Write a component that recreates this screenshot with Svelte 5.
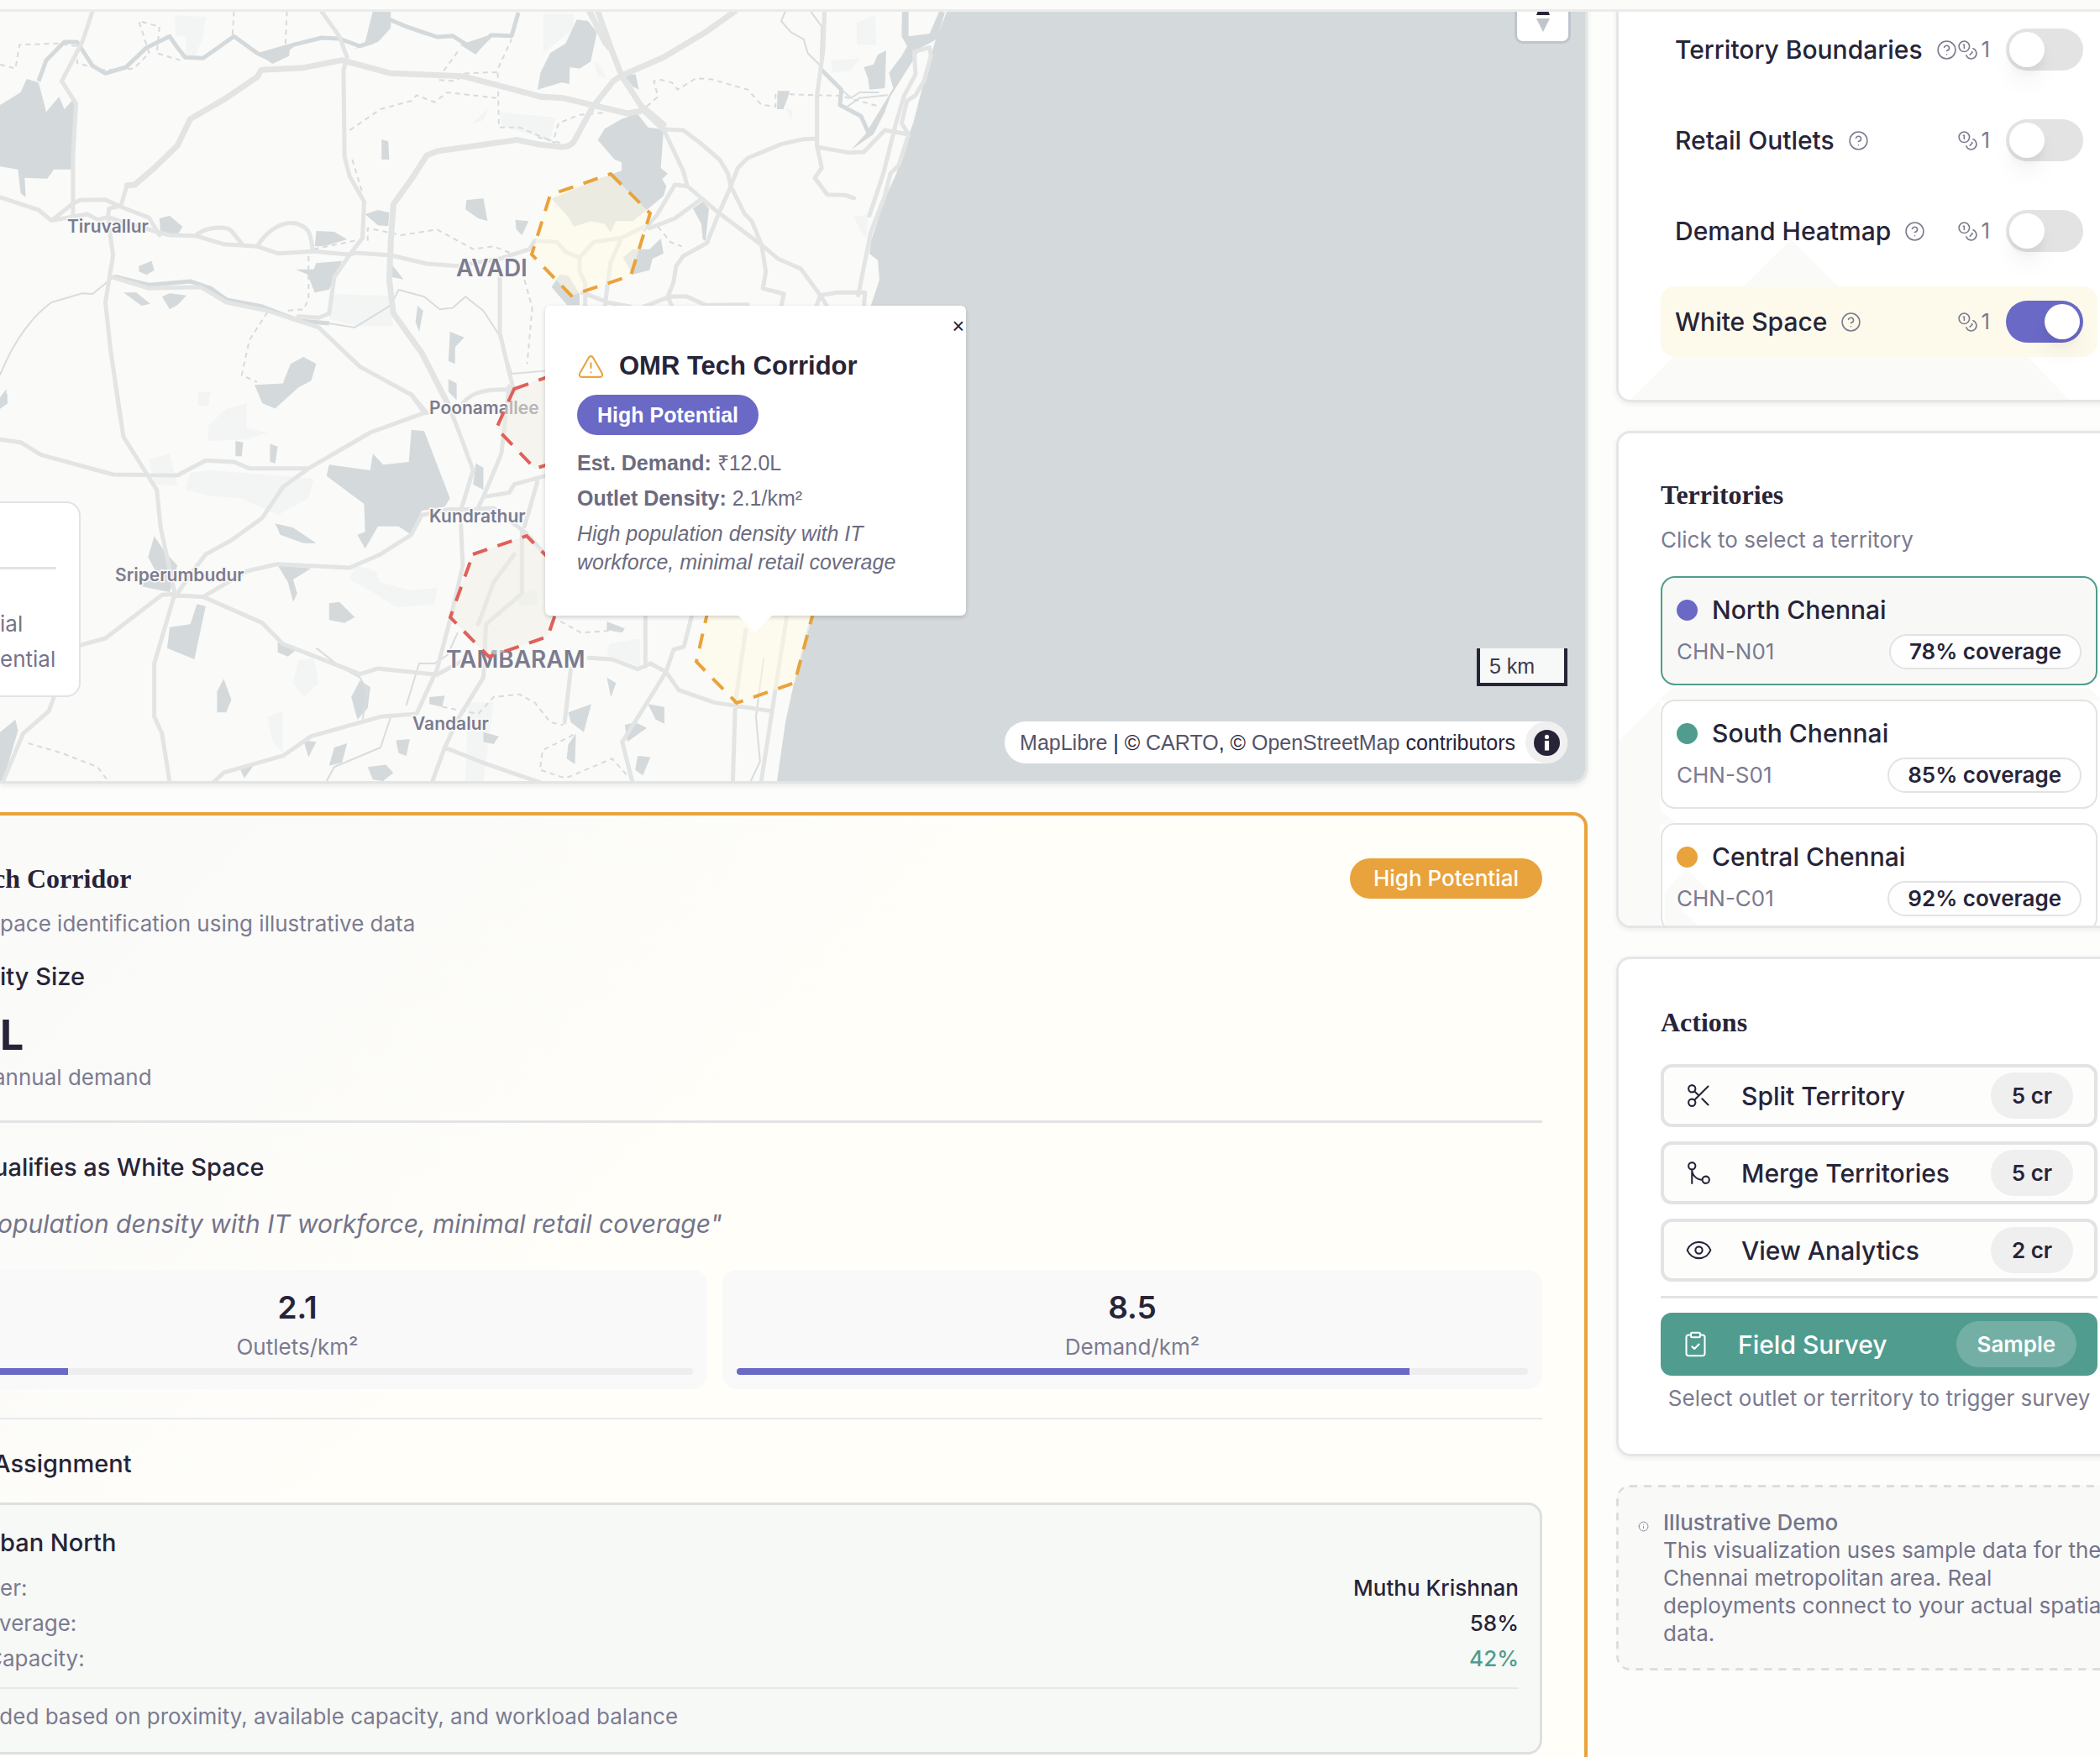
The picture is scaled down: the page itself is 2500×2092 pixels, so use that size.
<script lang="ts">
  const icons = {
    help: "M2 12a10 10 0 1 0 20 0a10 10 0 1 0-20 0M9.09 9a3 3 0 0 1 5.83 1c0 2-3 3-3 3M12 17h.01",
    info: "M2 12a10 10 0 1 0 20 0a10 10 0 1 0-20 0M12 16v-4M12 8h.01",
    coins: "M2 8a6 6 0 1 0 12 0a6 6 0 1 0-12 0M18.09 10.37A6 6 0 1 1 10.34 18M7 6h1v4M16.71 13.88l.7.71-2.82 2.82",
    warning: "m21.73 18-8-14a2 2 0 0 0-3.48 0l-8 14A2 2 0 0 0 4 21h16a2 2 0 0 0 1.73-3M12 9v4M12 17h.01",
    scissors: "M3 6a3 3 0 1 0 6 0a3 3 0 1 0-6 0M8.12 8.12 12 12M20 4 8.12 15.88M3 18a3 3 0 1 0 6 0a3 3 0 1 0-6 0M14.8 14.8 20 20",
    merge: "M15 18a3 3 0 1 0 6 0a3 3 0 1 0-6 0M3 6a3 3 0 1 0 6 0a3 3 0 1 0-6 0M6 21V9a9 9 0 0 0 9 9",
    eye: "M2.06 12.35a1 1 0 0 1 0-.7 10.75 10.75 0 0 1 19.88 0 1 1 0 0 1 0 .7 10.75 10.75 0 0 1-19.88 0M9 12a3 3 0 1 0 6 0a3 3 0 1 0-6 0",
    clipboard: "M9 2h6a1 1 0 0 1 1 1v2a1 1 0 0 1-1 1H9a1 1 0 0 1-1-1V3a1 1 0 0 1 1-1zM16 4h2a2 2 0 0 1 2 2v14a2 2 0 0 1-2 2H6a2 2 0 0 1-2-2V6a2 2 0 0 1 2-2h2M9 14l2 2 4-4"
  };

  let layers = [
    { name: "Territory Boundaries", cost: 1, on: false },
    { name: "Retail Outlets", cost: 1, on: false },
    { name: "Demand Heatmap", cost: 1, on: false },
    { name: "White Space", cost: 1, on: true }
  ];

  const territories = [
    { name: "North Chennai", code: "CHN-N01", coverage: 78, color: "#6a69c6" },
    { name: "South Chennai", code: "CHN-S01", coverage: 85, color: "#509c8f" },
    { name: "Central Chennai", code: "CHN-C01", coverage: 92, color: "#e8a33d" }
  ];

  let selected = "CHN-N01";

  const actions = [
    { label: "Split Territory", icon: icons.scissors, cost: "5 cr" },
    { label: "Merge Territories", icon: icons.merge, cost: "5 cr" },
    { label: "View Analytics", icon: icons.eye, cost: "2 cr" }
  ];

  const stats = [
    { value: "2.1", label: "Outlets/km²", percent: 21 },
    { value: "8.5", label: "Demand/km²", percent: 85 }
  ];

  // each sheet of the base map has its own grid
  const sheets = [
    {
      transform: "scale(.6122 .3333)",
      urban: "M340 55L400 60L395 130L380 200L360 200L362 130L342 130ZM640 1070L650 1052L755 1055L765 1165L700 1165L640 1140ZM972 400L1080 420L1070 500L975 450ZM918 440L948 390L940 430ZM385 1400L410 1400L405 1450L385 1450Z",
      water: "M0 375L40 330L52 282L75 295L90 400L115 345L125 390L145 350L140 605L105 605L92 638L48 635L50 705L40 690L35 605L0 595ZM742 498L755 505L757 570L742 570ZM710 765L735 750L757 760L755 808L735 805ZM907 715L940 708L948 790L930 780L905 748ZM1002 785L1028 790L1015 840L1004 820ZM310 780L330 770L355 810L345 840L312 835ZM615 825L650 828L675 855L630 880L612 880ZM575 962L610 962L615 940L665 932L640 1035L612 1045L598 980ZM762 945L785 998L762 990ZM270 950L295 932L300 965L285 982L270 970ZM240 1045L265 1045L292 1085L275 1092ZM315 1060L330 1048L363 1055L345 1090L330 1105ZM812 1092L823 1110L815 1185L808 1150ZM875 1185L903 1205L885 1240L885 1300L872 1290ZM495 1375L550 1370L565 1300L590 1275L615 1300L605 1360L580 1385L535 1460L510 1440ZM872 1355L888 1370L888 1430L872 1400ZM725 40L760 40L760 100L735 150L690 175L710 150ZM500 190L565 155L562 200L530 228ZM895 160L960 120L925 195ZM0 1440L15 1405L12 1445L0 1460Z",
      rivers: "M75 290L90 215L125 150L150 150L180 235L205 262L245 240L285 170L330 130L345 170L360 205L395 208L455 130L500 190L530 215L570 160L625 135L660 138L700 165L725 150L745 60L790 95L850 132L880 128L925 180L955 125L995 128L1008 45M222 988L290 1018L370 1005L410 1030L440 1070L510 1095L580 1145L640 1155",
      streams: "M0 1340C30 1200 70 1120 100 1080L160 1048L180 1050L222 988M640 1155L690 1170L760 1090L775 1035L825 1060L855 1105L880 1100L905 1060L940 1110L970 1195L995 1335L1060 1325",
      tracks: "M0 230L30 245L38 160L110 155L150 165L150 225L200 250L260 245L290 190L270 75L310 95L305 190L350 215M455 40L452 130M558 40L555 160M890 185L850 285L885 290L905 262L965 258L995 140M968 260L970 455L1010 455L1080 510M680 465L740 390L800 360L810 340L845 365L870 330L965 350M685 570L705 690M715 860L715 815L780 840L850 820L920 890L960 880L1000 910M600 915L600 1070L590 1105L555 1110M520 1115L485 1215L470 1340L500 1365M1020 1000L1035 1100L1025 1300M610 890L690 860",
      highways: "M247 662L262 660L300 600L345 520L370 425L440 350L500 275L508 250L590 242L665 215L760 262L900 272L1050 345L1060 347M870 1440L820 1260L765 1120L757 1000L760 860L765 730L800 640L830 555L850 540L1005 500",
      roads: "M0 705L75 750L100 788L170 765L190 785L210 775L250 800L330 840L380 842L435 872L500 880L540 905L610 898L680 910L690 903L760 912L830 942L890 950L970 925L1030 890L1040 860M180 40L160 150L120 290L148 370L142 560L142 770M100 788L140 730L155 715L205 713L230 735L290 778L310 840M210 775L212 745L235 735L247 662M625 40L660 130L675 205L668 250L670 560L680 630L708 720L705 850L680 910L650 990L640 1120L620 1135L580 1130M210 775L215 850L220 910L205 1080L215 1250L235 1500M218 990L290 1030L390 1025L440 1080L520 1110L620 1170L700 1310L800 1410L830 1475M380 842C400 810 440 805 450 825L472 875M500 880C520 820 550 790 575 798C600 810 605 830 608 898M972 985L972 1190L990 1330L1000 1400M900 1440C920 1395 950 1390 1000 1392"
    },
    {
      transform: "translate(0 460) scale(.6122 .3333)",
      urban: "M405 300L480 310L610 330L600 400L540 460L470 400L405 390L360 370L370 310ZM440 80L480 60L480 150L520 165L480 190L405 195L405 140ZM290 260L330 240L345 355L300 350ZM690 640L730 660L740 700L800 730L850 720L845 780L770 790L730 740L680 690ZM580 980L610 970L620 1060L590 1110L570 1060ZM910 1130L960 1130L940 1410L905 1410ZM520 1180L550 1160L550 1310L530 1270ZM1185 920L1245 900L1245 1000L1180 960ZM1005 740L1045 730L1045 780L1010 785Z",
      water: "M800 155L825 160L875 400L865 430L820 445L800 530L775 500L735 500L710 580L695 530L710 520L708 420L635 320L640 280L720 300L725 240L745 280L795 270ZM300 535L320 590L345 640L330 735L275 715L275 690L305 670L288 610ZM383 778L400 785L378 975L325 935L330 860L370 850ZM540 640L605 650L570 690L578 740L570 770L560 700ZM640 775L660 770L690 825L670 845L640 835ZM435 1045L450 1120L440 1165L422 1165L422 1090ZM540 915L580 935L560 965L540 950ZM700 1050L720 1075L715 1150L695 1190L683 1110ZM535 490L570 505L615 560L590 560L545 530ZM458 195L473 200L470 250L458 250ZM525 205L540 215L535 275L525 270ZM925 275L940 290L940 370L920 350ZM0 1235L30 1190L35 1230L5 1415L0 1415ZM650 1290L675 1275L665 1345L640 1355ZM715 1360L750 1352L765 1380L745 1410L725 1405ZM770 1265L797 1260L790 1320L775 1310ZM590 1265L615 1270L600 1325ZM465 1360L495 1350L475 1400ZM835 1110L865 1105L860 1145L835 1135ZM940 1235L970 1250L960 1278L940 1270ZM1105 1165L1150 1135L1135 1235L1110 1200ZM1180 1040L1198 1060L1188 1110ZM1260 1135L1292 1145L1292 1205L1275 1190ZM1215 1210L1235 1200L1258 1220L1220 1270ZM1240 1320L1265 1325L1250 1390L1235 1370ZM1105 1280L1120 1240L1118 1350L1102 1330ZM1180 840L1215 865L1210 880L1180 870ZM0 40L12 10L15 60L0 80Z",
      rivers: "",
      streams: "M615 935L660 1000L700 1040L715 1090L705 1190M760 1180L740 1290L650 1360L635 1410M890 880L870 960L845 990L815 990L790 1140M1485 970L1470 1180L1478 1340L1460 1410",
      tracks: "M55 1275L120 1310L190 1360L210 1410M860 1145L930 1170L960 1110L1010 1100L1040 1130L1070 1200L1095 1210M1115 1245L1055 1300L1050 1370L1100 1400L1190 1330L1225 1400M1090 840L1130 880L1210 870",
      highways: "",
      roads: "M225 0L240 180L305 370L312 500L340 740L300 990L300 1180L315 1240L330 1415M0 190L40 200L80 245L220 315L345 318L400 265L455 270L485 293L600 293M800 30L825 95L720 165L650 240L600 293L550 360L510 470L450 550L400 600L375 660L345 740M870 60L890 150L920 300L895 450L900 640L880 800L850 1010L810 1170M1060 320L1000 350L990 380L940 395L920 470M990 0L975 240L940 395M820 460L870 440L960 435L1020 520L1060 600M335 745L395 752L480 660L540 635L680 648L740 600L800 530L820 460M155 925L205 900L315 745L340 742M395 752L510 845L550 920L700 1028L735 1008L850 1030L900 980M1020 500L1045 340M1015 520L1015 740L945 850L940 1040L890 1190L865 1290L840 1415M1000 600L960 700L930 850M865 1290L940 1345L1050 1415M415 1415L435 1380L550 1320L605 1250L740 1180L810 1170M105 1110L95 1160L45 1240L5 1415M1110 1010L1098 1200M1145 970L1190 975L1240 1010L1265 990L1295 1020L1320 1085L1390 1130L1500 1160M1255 820L1255 1000M1345 820L1330 930L1310 940L1295 1020L1265 1110L1210 1270L1230 1415M1425 1415L1430 1130L1450 870M1480 1415L1530 820"
    },
    {
      transform: "translate(640 0) scale(.3333)",
      urban: "M1140 80L1205 55L1210 160L1140 160ZM1050 215L1150 210L1120 250L1050 260ZM20 50L130 50L130 100L20 190ZM0 425L60 420L50 470L0 480ZM200 220L225 235L245 280L215 270ZM885 385L912 395L905 430ZM1130 775L1180 765L1175 850L1150 820Z",
      water: "M140 70L180 75L212 115L190 220L150 245L115 240L113 300L85 295L0 320L10 260L45 190L100 155ZM355 405L395 455L450 462L440 600L465 620L445 640L460 665L450 700L400 742L340 790L280 790L260 830L240 800L190 790L130 810L110 775L50 710L215 640L300 610L300 580L275 570L215 500L240 460L300 425ZM310 270L350 265L362 320L340 310ZM857 325L900 325L895 345L878 390L855 390ZM555 745L590 720L612 745L600 860L590 855L585 800ZM305 920L340 890L400 890L440 852L450 905L410 925L400 965L340 980ZM80 980L110 985L150 1050L150 1090L105 1090L50 1025ZM1255 260L1300 200L1320 165L1300 130L1302 40L1325 40L1325 130L1400 120L1435 40L1455 45L1425 140L1370 170L1310 265L1260 345L1240 400L1200 480L1120 535L1170 480L1225 390L1270 315ZM1165 240L1200 230L1215 195L1245 180L1242 280L1240 315L1185 320L1180 280Z",
      rivers: "M1010 245L1085 320L1080 375L1155 415L1180 470",
      streams: "M975 40L1015 95L1010 245M885 40L870 75L905 115L950 140L965 190L1010 235M1100 385L1150 350L1250 340M1085 320L1120 350L1150 330L1220 330",
      tracks: "M390 380L430 345L415 290L440 285L480 295L500 320L565 280L620 283L750 320L800 375L850 380L850 330M900 337L1080 342L1220 380M60 490L75 440L150 410L240 402M0 490L80 510M430 810L475 865L515 880",
      highways: "M8 345L90 350L320 405L380 395M-74 500L0 515L85 525Q115 525 130 505L195 385L270 290L300 270L450 205L600 115L705 40M185 40L240 150L265 180M215 40L265 180L300 270L380 395L450 462M380 385L450 445",
      roads: "M450 462L520 610L535 665L640 755L800 875L860 925L940 960L1010 1055L1035 1095M450 462L520 465L580 510L650 570L680 620L690 665L740 765L765 790L800 875L815 970L805 1030L880 1050L870 1095M998 495L950 497L870 515L750 565L715 600L690 665L640 780L605 868L520 915L495 950L485 1010L465 1060L480 1095M1025 40L1020 180L998 340L998 520L1015 600L990 635L1035 695L1100 697L1130 708M998 525L1110 545L1165 543L1240 465L1325 480M1345 185L1400 170L1405 200L1380 290L1350 340L1320 360L1300 440L1325 480L1290 590L1260 620L1240 700L1190 830L1145 1055M1345 185L1350 265L1310 340L1280 440L1235 620L1185 770M380 820L425 770L490 660L535 665M400 815L490 780L580 715M380 1095L470 1060L530 1058L600 1090L750 1088M1010 1055L1070 1045L1170 1045L1165 1095M160 1045L250 1080L330 1095M995 1095L1010 1055M0 860L70 865L100 900L150 920L150 970L170 1010L170 1095M150 920L200 865L300 850L380 810M300 850L260 940L240 1095"
    }
  ];

  const places = [
    { name: "Tiruvallur", x: 80, y: 277, city: false },
    { name: "AVADI", x: 543, y: 329, city: true },
    { name: "Poonamallee", x: 511, y: 493, city: false },
    { name: "Kundrathur", x: 511, y: 622, city: false },
    { name: "Sriperumbudur", x: 137, y: 692, city: false },
    { name: "TAMBARAM", x: 531, y: 795, city: true },
    { name: "Vandalur", x: 491, y: 869, city: false }
  ];

  const zones = [
    { points: "727,207 774,254 751,328 680,352 633,303 655,232", high: true },
    { points: "612,463 683,438 730,486 708,535 637,558 591,510", high: false },
    { points: "563,660 627,638 676,688 652,758 582,782 536,735", high: false },
    { points: "851,690 925,668 972,715 946,813 877,837 829,788", high: true }
  ];
</script>

{#snippet icon(path, size)}
  <svg class="icon {size}" viewBox="0 0 24 24" aria-hidden="true"><path d={path} /></svg>
{/snippet}

<div class="page">
  <header class="topbar"></header>

  <div class="layout">
    <main>
      <section class="map">
        <svg class="canvas" viewBox="0 0 1887 930" preserveAspectRatio="xMinYMin slice">
          <rect class="land" width="1887" height="930" />
          {#each sheets as sheet}
            <g transform={sheet.transform}>
              <path class="urban" d={sheet.urban} />
              <path class="water" d={sheet.water} />
              <path class="river" d={sheet.rivers} />
              <path class="stream" d={sheet.streams} />
              <path class="track" d={sheet.tracks} />
            </g>
          {/each}
          <path class="water" d="M1127 0L1127 14L1113 50L1103 85L1087 147L1082 160L1067 207L1053 237L1037 287L1035 302L1045 310L1047 333L1037 363L1000 560L965 732L948 800L935 860L925 930H1887V0Z" />
          {#each sheets as sheet}
            <g transform={sheet.transform}>
              <path class="road" d={sheet.roads} />
              <path class="road highway" d={sheet.highways} />
            </g>
          {/each}
          {#each places as place}
            <text class="place" class:city={place.city} x={place.x} y={place.y}>{place.name}</text>
          {/each}
          {#each zones as zone}
            <polygon class="zone" class:high={zone.high} points={zone.points} />
          {/each}
        </svg>

        <button class="compass" aria-label="Reset bearing to north">
          <svg viewBox="0 0 20 60" aria-hidden="true">
            <path d="M10 8L18 29H2Z" fill="#272438" />
            <path d="M2 33H18L10 49Z" fill="#c0c4cb" />
          </svg>
        </button>

        <div class="legend">
          <div class="legend-title"></div>
          <p>ial</p>
          <p>ential</p>
        </div>

        <article class="popup">
          <button class="close" aria-label="Close popup">×</button>
          <h3>{@render icon(icons.warning, "large")}OMR Tech Corridor</h3>
          <span class="popup-badge">High Potential</span>
          <p><strong>Est. Demand:</strong> ₹12.0L</p>
          <p><strong>Outlet Density:</strong> 2.1/km²</p>
          <p><em>High population density with IT workforce, minimal retail coverage</em></p>
        </article>

        <div class="map-corner">
          <div class="scale">5 km</div>
          <div class="attribution">
            <span><a href="#maplibre">MapLibre</a> | © <a href="#carto">CARTO</a>, © <a href="#osm">OpenStreetMap</a> contributors</span>
            <button aria-label="Toggle attribution">
              <svg viewBox="0 0 24 24" aria-hidden="true">
                <circle cx="12" cy="12" r="12" fill="#272438" />
                <circle cx="12" cy="6.5" r="2" fill="#fff" />
                <path d="M10 10h4v9h-4z" fill="#fff" />
              </svg>
            </button>
          </div>
        </div>
      </section>

      <section class="detail">
        <div class="detail-head">
          <h2 class="cut">ch Corridor</h2>
          <span class="badge">High Potential</span>
        </div>
        <p class="muted">pace identification using illustrative data</p>
        <h4 class="size-title">ity Size</h4>
        <p class="amount">L</p>
        <p class="muted caption cut">annual demand</p>
        <hr />
        <h4 class="cut">ualifies as White Space</h4>
        <p class="quote">opulation density with IT workforce, minimal retail coverage"</p>
        <div class="stats">
          {#each stats as stat}
            <div class="stat">
              <p class="value">{stat.value}</p>
              <p class="label">{stat.label}</p>
              <div class="bar"><div style="width: {stat.percent}%"></div></div>
            </div>
          {/each}
        </div>
        <hr class="thin" />
        <h4 class="cut">Assignment</h4>
        <div class="assignment">
          <h4>ban North</h4>
          <dl>
            <div><dt>er:</dt><dd>Muthu Krishnan</dd></div>
            <div><dt class="cut-more">overage:</dt><dd>58%</dd></div>
            <div><dt class="cut-more">Capacity:</dt><dd class="free">42%</dd></div>
          </dl>
          <p class="reason cut-more">nded based on proximity, available capacity, and workload balance</p>
        </div>
      </section>
    </main>

    <aside>
      <section class="card layers">
        <svg class="hills" viewBox="0 0 620 476" preserveAspectRatio="xMinYMax slice" aria-hidden="true">
          <path d="M14 476L205 285L340 420L413 348L536 476Z" />
        </svg>
        {#each layers as layer, i}
          <div class="layer" class:on={layer.on}>
            <label for="layer-{i}">{layer.name}</label>
            <button class="help" aria-label="About {layer.name}">{@render icon(icons.help, "small")}</button>
            <span class="cost">{@render icon(icons.coins, "small")}{layer.cost}</span>
            <input id="layer-{i}" type="checkbox" role="switch" bind:checked={layer.on} />
          </div>
        {/each}
      </section>

      <section class="card territories">
        <svg class="hills" viewBox="0 0 620 586" preserveAspectRatio="xMinYMax slice" aria-hidden="true">
          <path d="M0 366L63 303H560L620 363V318H49V448L71 466H49V586H0ZM55 546L80 518L110 546L74 567L95 586H55Z" />
        </svg>
        <h2>Territories</h2>
        <p class="muted">Click to select a territory</p>
        <div class="list">
          {#each territories as territory}
            <button class="territory" class:selected={selected === territory.code} on:click={() => (selected = territory.code)}>
              <span class="name"><i style="background: {territory.color}"></i>{territory.name}</span>
              <span class="meta">{territory.code}<b>{territory.coverage}% coverage</b></span>
            </button>
          {/each}
        </div>
      </section>

      <section class="card">
        <h2>Actions</h2>
        <div class="actions">
          {#each actions as action}
            <button class="action">
              {@render icon(action.icon, "large")}
              <span>{action.label}</span>
              <b>{action.cost}</b>
            </button>
          {/each}
          <hr />
          <button class="action primary">
            {@render icon(icons.clipboard, "large")}
            <span>Field Survey</span>
            <b>Sample</b>
          </button>
        </div>
        <p class="hint">Select outlet or territory to trigger survey</p>
      </section>

      <section class="demo">
        <svg class="outline" aria-hidden="true"><rect width="100%" height="100%" rx="16" /></svg>
        {@render icon(icons.info, "tiny")}
        <div>
          <strong>Illustrative Demo</strong>
          <p>This visualization uses sample data for the Chennai metropolitan area. Real deployments connect to your actual spatial data.</p>
        </div>
      </section>
    </aside>
  </div>
</div>

<style>
  :global(body) {
    background: #fdfdfb;
    overflow: hidden;
  }

  .page {
    position: relative;
    height: 100vh;
    overflow: hidden;
    font-family: Inter, "Liberation Sans", sans-serif;
    font-size: 26px;
    line-height: 34px;
    color: #272438;
  }

  .topbar {
    position: absolute;
    z-index: 5;
    top: 0;
    left: 0;
    right: 0;
    height: 11px;
    background: #fbfbf9;
    border-bottom: 3px solid #ebebeb;
  }

  /* the panels run past both sides of the window */
  .layout {
    display: grid;
    grid-template-columns: minmax(0, 1fr) 626px;
    column-gap: 34px;
    align-items: start;
    margin-right: -50px;
  }

  .cut {
    text-indent: -8px;
  }

  .cut-more {
    text-indent: -16px;
  }

  h2, h3, h4, p, dl, dd {
    margin: 0;
  }

  h2 {
    font-family: "Liberation Serif", serif;
    font-size: 32px;
    line-height: 48px;
    font-weight: bold;
  }

  h4 {
    font-size: 29px;
    line-height: 42px;
    font-weight: 500;
  }

  hr {
    width: 100%;
    height: 3px;
    margin: 0;
    border: none;
    background: #e3e3e5;
  }

  button {
    font: inherit;
    color: inherit;
    padding: 0;
    border: none;
    background: none;
    cursor: pointer;
  }

  .muted {
    margin-top: 13px;
    color: #7b7b90;
  }

  .icon {
    flex: none;
    fill: none;
    stroke: currentColor;
    stroke-width: 1.5;
    stroke-linecap: round;
    stroke-linejoin: round;
  }

  .tiny {
    width: 13px;
    height: 13px;
  }

  .small {
    width: 25px;
    height: 25px;
  }

  .large {
    width: 33px;
    height: 33px;
  }

  /* map */
  .map {
    position: relative;
    border: 3px solid #e3e4e4;
    border-width: 0 3px 3px 0;
    border-radius: 0 0 17px 0;
    box-shadow: 0 2px 6px rgba(39, 36, 56, 0.1);
    font-family: "Liberation Sans", Arial, sans-serif;
    font-size: 25px;
  }

  .canvas {
    display: block;
    width: 100%;
    height: auto;
    border-radius: 0 0 14px 0;
  }

  .land {
    fill: #fafaf8;
  }

  .urban {
    fill: #f3f4f4;
  }

  .water {
    fill: #d4dadc;
  }

  .river, .stream, .track, .road {
    fill: none;
    stroke-linejoin: round;
    vector-effect: non-scaling-stroke;
  }

  .river {
    stroke: #d4dadc;
    stroke-width: 5;
  }

  .stream {
    stroke: #d8ddde;
    stroke-width: 2;
  }

  .track {
    stroke: #d8dade;
    stroke-width: 2;
    stroke-dasharray: 6 5;
  }

  .road {
    stroke: #e3e4e4;
    stroke-width: 5;
    stroke-linecap: round;
  }

  .highway {
    stroke-width: 7;
  }

  .place {
    font-family: Inter, sans-serif;
    font-size: 21px;
    font-weight: 600;
    fill: #7c7c90;
    stroke: #fafaf8;
    stroke-width: 3;
    paint-order: stroke;
  }

  .city {
    font-size: 28px;
  }

  .zone {
    fill: rgba(240, 237, 228, 0.5);
    stroke: #e0605a;
    stroke-width: 4;
    stroke-dasharray: 18 13;
  }

  .zone.high {
    fill: rgba(255, 249, 230, 0.55);
    stroke: #e9a33c;
  }

  .compass {
    position: absolute;
    right: 17px;
    top: -14px;
    width: 67px;
    height: 66px;
    border: 3px solid #c0c4ce;
    border-radius: 10px;
    background: #fff;
  }

  .compass svg {
    display: block;
    width: 20px;
    height: 60px;
    margin: 0 auto;
  }

  .legend {
    position: absolute;
    left: 0;
    top: 597px;
    box-sizing: border-box;
    width: 96px;
    height: 233px;
    padding: 30px 27px 0 0;
    border: 2px solid #e3e3e6;
    border-left: none;
    border-radius: 0 17px 17px 0;
    background: rgba(255, 255, 255, 0.95);
    color: #74748a;
    font-family: Inter, sans-serif;
    font-size: 26px;
  }

  .legend-title {
    height: 46px;
    margin-bottom: 48px;
    border-bottom: 3px solid #e3e3e6;
  }

  .legend p + p {
    margin-top: 8px;
  }

  .popup {
    position: absolute;
    left: 649px;
    top: 364px;
    width: 501px;
    box-sizing: border-box;
    padding: 51px 76px 47px 38px;
    border-radius: 6px;
    background: #fff;
    box-shadow: 0 2px 5px rgba(39, 36, 56, 0.2);
    color: #6b6b80;
  }

  .popup::after {
    content: "";
    position: absolute;
    top: 100%;
    left: 230px;
    border: 20px solid transparent;
    border-top-color: #fff;
    border-bottom: none;
  }

  .popup h3 {
    display: flex;
    align-items: center;
    gap: 17px;
    font-size: 31px;
    line-height: 42px;
    color: #272438;
  }

  .popup .icon {
    color: #e9a33c;
  }

  .popup-badge {
    display: inline-block;
    margin: 13px 0 8px;
    padding: 7px 24px;
    border-radius: 24px;
    background: #6a69c6;
    color: #fff;
    font-weight: bold;
  }

  .popup p {
    margin-top: 8px;
  }

  .close {
    position: absolute;
    top: 7px;
    right: 2px;
    color: #272438;
  }

  .map-corner {
    position: absolute;
    right: 21px;
    bottom: 21px;
    display: flex;
    flex-direction: column;
    align-items: flex-end;
    gap: 42px;
  }

  .scale {
    width: 67px;
    padding: 4px 0 3px 11px;
    box-sizing: content-box;
    border: 4px solid #272438;
    border-top: none;
    padding-right: 22px;
    background: rgba(255, 255, 255, 0.8);
    color: #3d3a4e;
  }

  .attribution {
    display: flex;
    align-items: center;
    gap: 12px;
    padding-left: 18px;
    border-radius: 25px;
    background: #fff;
  }

  .attribution a {
    color: #55536a;
    text-decoration: none;
  }

  .attribution button {
    width: 50px;
    height: 50px;
    border-radius: 25px;
    background: #f0f0f0;
  }

  .attribution svg {
    display: block;
    width: 31px;
    height: 31px;
    margin: auto;
  }

  /* white space detail */
  .detail {
    margin-top: 34px;
    padding: 51px 50px 50px 0;
    border: 4px solid #e9a33c;
    border-left: none;
    border-radius: 0 17px 0 0;
    background: linear-gradient(135deg, #fafaf9 10%, #fffef9 40%);
  }

  .detail-head {
    display: flex;
    justify-content: space-between;
    align-items: center;
  }

  .badge {
    padding: 7px 28px;
    border-radius: 24px;
    background: #e9a33c;
    color: #fff;
    font-weight: 500;
  }

  .size-title {
    margin-top: 25px;
  }

  .amount {
    margin-top: 19px;
    font-size: 50px;
    line-height: 58px;
    font-weight: 700;
  }

  .caption {
    margin-top: 5px;
  }

  .detail > hr {
    margin: 34px 0 32px;
  }

  .detail > .thin {
    height: 2px;
    background: #e8e9ed;
  }

  .quote {
    margin: 25px 0 34px;
    font-size: 30px;
    line-height: 42px;
    font-style: italic;
    color: #74748a;
    text-indent: -3px;
  }

  .stats {
    display: grid;
    grid-template-columns: 1fr 1fr;
    gap: 18px;
    margin-left: -134px;
  }

  .stat {
    padding: 17px;
    border-radius: 17px;
    background: #f9f9f9;
    text-align: center;
  }

  .value {
    font-size: 37px;
    line-height: 56px;
    font-weight: 600;
  }

  .label {
    line-height: 38px;
    color: #7b7b90;
  }

  .bar {
    height: 8px;
    margin-top: 6px;
    border-radius: 4px;
    background: #eeeeef;
    overflow: hidden;
  }

  .bar div {
    height: 100%;
    background: #6a69c6;
  }

  .assignment {
    margin-top: 25px;
    padding: 24px 25px 25px 0;
    border: 3px solid #dddfe1;
    border-left: none;
    border-radius: 0 17px 17px 0;
    background: #f7f9f7;
  }

  dl {
    display: grid;
    gap: 8px;
    margin: 16px 0 17px;
  }

  dl div {
    display: flex;
    justify-content: space-between;
  }

  dt, .reason {
    color: #7b7b90;
  }

  dd {
    font-weight: 500;
  }

  .free {
    color: #509c8f;
  }

  .reason {
    padding-top: 16px;
    border-top: 2px solid #e6e8e9;
  }

  /* sidebar */
  aside {
    display: grid;
    gap: 34px;
  }

  .card {
    position: relative;
    padding: 51px 50px 49px;
    border: 3px solid #e6e6e8;
    border-radius: 17px;
    background: #fff;
    box-shadow: 0 2px 6px rgba(39, 36, 56, 0.08);
  }

  .hills {
    position: absolute;
    left: 0;
    bottom: 0;
    width: 100%;
    fill: #fafaf9;
  }

  .layers {
    display: grid;
    gap: 24px;
    padding: 17px 50px 51px;
    border-top: none;
    border-radius: 0 0 17px 17px;
  }

  .layer {
    position: relative;
    display: flex;
    align-items: center;
    height: 84px;
    padding: 0 17px;
    border-radius: 17px;
  }

  .layer.on {
    background: #fdfaeb;
  }

  .layer label {
    font-size: 30px;
    font-weight: 500;
    white-space: nowrap;
  }

  .help {
    height: 25px;
    margin-left: 16px;
    color: #7b7b90;
  }

  .help .icon {
    display: block;
  }

  .cost {
    display: flex;
    align-items: center;
    gap: 4px;
    margin-left: auto;
    margin-right: 19px;
    color: #7b7b90;
  }

  .layer input {
    appearance: none;
    flex: none;
    width: 92px;
    height: 50px;
    margin: 0;
    padding: 4px;
    border-radius: 25px;
    background: #e3e3e4;
  }

  .layer input::before {
    content: "";
    display: block;
    width: 42px;
    height: 42px;
    border-radius: 21px;
    background: #fff;
    box-shadow: 0 20px 30px -6px rgba(39, 36, 56, 0.08), 0 8px 12px -4px rgba(39, 36, 56, 0.08);
  }

  .layer input:checked {
    background: #6a69c6;
  }

  .layer input:checked::before {
    margin-left: 42px;
  }

  .territories {
    height: 488px;
    padding-top: 49px;
    overflow: hidden;
  }

  .list {
    position: relative;
    display: grid;
    gap: 17px;
    margin-top: 26px;
  }

  .territory {
    padding: 17px;
    border: 2px solid #e3e3e6;
    border-radius: 17px;
    text-align: left;
  }

  .territory.selected {
    border-color: #509c8f;
    background: #f8f9f7;
  }

  .name {
    display: flex;
    align-items: center;
    gap: 17px;
    font-size: 30px;
    line-height: 42px;
    font-weight: 500;
  }

  .name i {
    width: 25px;
    height: 25px;
    border-radius: 13px;
  }

  .meta {
    display: flex;
    justify-content: space-between;
    align-items: center;
    margin-top: 8px;
    color: #7b7b90;
  }

  .meta b {
    padding: 2px 22px;
    border: 2px solid #e3e3e6;
    border-radius: 21px;
    background: #fefefe;
    color: #272438;
    font-weight: 600;
  }

  .actions {
    display: grid;
    gap: 17px;
    margin-top: 26px;
  }

  .action {
    display: flex;
    align-items: center;
    height: 75px;
    padding: 0 25px;
    border: 4px solid #e3e3e5;
    border-radius: 13px;
    background: #fdfdfc;
    font-size: 30px;
    font-weight: 500;
  }

  .action span {
    margin-left: 34px;
  }

  .action b {
    margin-left: auto;
    padding: 10px 25px;
    border-radius: 28px;
    background: #efefef;
    font-size: 26px;
    line-height: 35px;
    font-weight: 600;
  }

  .primary {
    border: none;
    background: #509c8f;
    color: #fff;
  }

  .primary b {
    background: rgba(255, 255, 255, 0.2);
  }

  .hint {
    margin-top: 10px;
    text-align: center;
    white-space: nowrap;
    color: #7b7b90;
  }

  .demo {
    position: relative;
    display: flex;
    gap: 17px;
    padding: 28px 26px;
    border-radius: 17px;
    background: #f9f9f8;
    line-height: 33px;
    color: #74748a;
  }

  .outline {
    position: absolute;
    inset: 0;
    width: 100%;
    height: 100%;
    border-radius: 17px;
  }

  .outline rect {
    fill: none;
    stroke: #dddddf;
    stroke-width: 6;
    stroke-dasharray: 9 8;
  }

  .demo .icon {
    margin-top: 15px;
  }

  .demo strong {
    font-weight: 500;
  }
</style>
